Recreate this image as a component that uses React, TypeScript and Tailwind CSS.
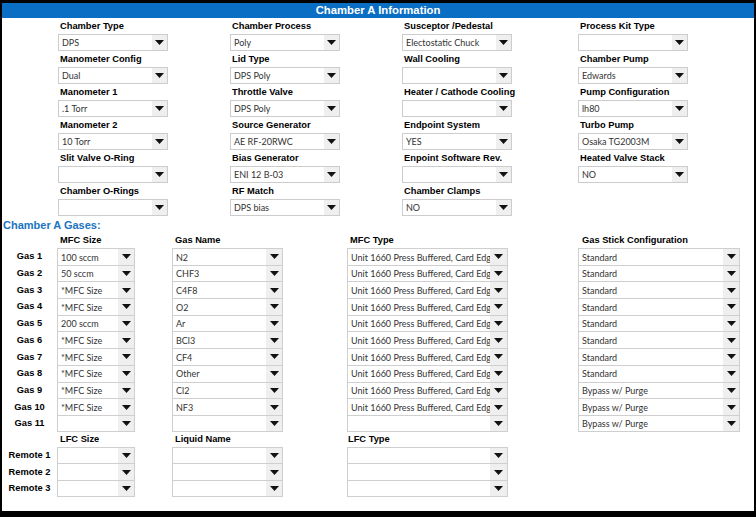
import React from "react";

const label = "font-['Liberation_Sans',Arial,sans-serif] font-bold text-[9.3px] text-black whitespace-nowrap";
const valueFont = "font-['Lato','Open_Sans',sans-serif] text-[9px] text-[#333]";

function Arrow() {
  return (
    <svg width="9" height="5" viewBox="0 0 9 5">
      <polygon points="0,0 9,0 4.5,5" fill="#111" />
    </svg>
  );
}

function Drop({ value, arrowW = 15 }: { value?: string; arrowW?: number }) {
  return (
    <div className="flex h-full w-full items-stretch">
      <div className={"flex flex-1 items-center overflow-hidden whitespace-nowrap pl-[3px] pt-[1px] " + valueFont}>{value}</div>
      <div className="flex items-center justify-center bg-[#efefef]" style={{ width: arrowW }}>
        <Arrow />
      </div>
    </div>
  );
}

const topRows: [string, string][][] = [
  [["Chamber Type", "DPS"], ["Chamber Process", "Poly"], ["Susceptor /Pedestal", "Electostatic Chuck"], ["Process Kit Type", ""]],
  [["Manometer Config", "Dual"], ["Lid Type", "DPS Poly"], ["Wall Cooling", ""], ["Chamber Pump", "Edwards"]],
  [["Manometer 1", ".1 Torr"], ["Throttle Valve", "DPS Poly"], ["Heater / Cathode Cooling", ""], ["Pump Configuration", "lh80"]],
  [["Manometer 2", "10 Torr"], ["Source Generator", "AE RF-20RWC"], ["Endpoint System", "YES"], ["Turbo Pump", "Osaka TG2003M"]],
  [["Slit Valve O-Ring", ""], ["Bias Generator", "ENI 12 B-03"], ["Enpoint Software Rev.", ""], ["Heated Valve Stack", "NO"]],
  [["Chamber O-Rings", ""], ["RF Match", "DPS bias"], ["Chamber Clamps", "NO"]],
];

const unit = "Unit 1660 Press Buffered, Card Edg";
const gases = [
  ["100 sccm", "N2", unit, "Standard"],
  ["50 sccm", "CHF3", unit, "Standard"],
  ["*MFC Size", "C4F8", unit, "Standard"],
  ["*MFC Size", "O2", unit, "Standard"],
  ["200 sccm", "Ar", unit, "Standard"],
  ["*MFC Size", "BCl3", unit, "Standard"],
  ["*MFC Size", "CF4", unit, "Standard"],
  ["*MFC Size", "Other", unit, "Standard"],
  ["*MFC Size", "Cl2", unit, "Bypass w/ Purge"],
  ["*MFC Size", "NF3", unit, "Bypass w/ Purge"],
  ["", "", "", "Bypass w/ Purge"],
];

function Cell({ value, w, ml, last, arrowW = 16 }: { value: string; w: number; ml: number; last: boolean; arrowW?: number }) {
  return (
    <div
      className={"h-full border-x border-t border-[#cfcfcf] " + (last ? "border-b" : "")}
      style={{ width: w, marginLeft: ml }}
    >
      <Drop value={value} arrowW={arrowW} />
    </div>
  );
}

export default function App() {
  return (
    <div className="flex h-[517px] w-[756px] flex-col overflow-hidden border-x-2 border-t-[3px] border-black bg-white">
      <div className="flex h-[15px] shrink-0 items-center justify-center bg-[#0a6ec4]">
        <span className="font-['Liberation_Sans',Arial,sans-serif] text-[11.3px] font-bold text-white">Chamber A Information</span>
      </div>

      <div className="pl-[56px]">
        {topRows.map((row, i) => (
          <div key={i} className="grid grid-cols-[172px_172px_176px_110px]">
            {row.map(([name, val], j) => (
              <div key={j} className="w-[110px]">
                <div className={"flex h-[16px] items-center pl-[2px] pt-[2px] " + label}>{name}</div>
                <div className="h-[17px] border border-[#cccccc]">
                  <Drop value={val} />
                </div>
              </div>
            ))}
          </div>
        ))}
      </div>

      <div className="flex h-[16px] shrink-0 items-center pl-[1px] pt-[2px] font-['Liberation_Sans',Arial,sans-serif] text-[11px] font-bold text-[#1a74c2]">
        Chamber A Gases:
      </div>

      <div className="flex h-[16px] shrink-0 items-center pt-[2px]">
        <div className="w-[55px]" />
        <div className={"w-[78px] pl-[3px] " + label}>MFC Size</div>
        <div className={"ml-[37px] w-[111px] pl-[3px] " + label}>Gas Name</div>
        <div className={"ml-[64px] w-[161px] pl-[3px] " + label}>MFC Type</div>
        <div className={"ml-[70px] w-[162px] pl-[4px] " + label}>Gas Stick Configuration</div>
      </div>

      {gases.map((g, i) => (
        <div key={i} className="flex h-[16.7px] shrink-0 items-stretch">
          <div className={"flex w-[55px] items-center justify-center pt-[2px] " + label}>Gas {i + 1}</div>
          <Cell value={g[0]} w={78} ml={0} last={i === gases.length - 1} />
          <Cell value={g[1]} w={111} ml={37} last={i === gases.length - 1} />
          <Cell value={g[2]} w={161} ml={64} last={i === gases.length - 1} arrowW={17} />
          <Cell value={g[3]} w={162} ml={70} last={i === gases.length - 1} />
        </div>
      ))}

      <div className="flex h-[15px] shrink-0 items-center pt-[2px]">
        <div className="w-[55px]" />
        <div className={"w-[78px] pl-[3px] " + label}>LFC Size</div>
        <div className={"ml-[37px] w-[111px] pl-[3px] " + label}>Liquid Name</div>
        <div className={"ml-[64px] w-[161px] pl-[1px] " + label}>LFC Type</div>
      </div>

      {[1, 2, 3].map((n) => (
        <div key={n} className="flex h-[16.7px] shrink-0 items-stretch">
          <div className={"flex w-[55px] items-center justify-center pt-[2px] " + label}>Remote {n}</div>
          <Cell value="" w={78} ml={0} last={n === 3} />
          <Cell value="" w={111} ml={37} last={n === 3} />
          <Cell value="" w={161} ml={64} last={n === 3} arrowW={17} />
        </div>
      ))}

      <div className="flex-1" />
      <div className="h-[6px] shrink-0 bg-black" />
    </div>
  );
}
